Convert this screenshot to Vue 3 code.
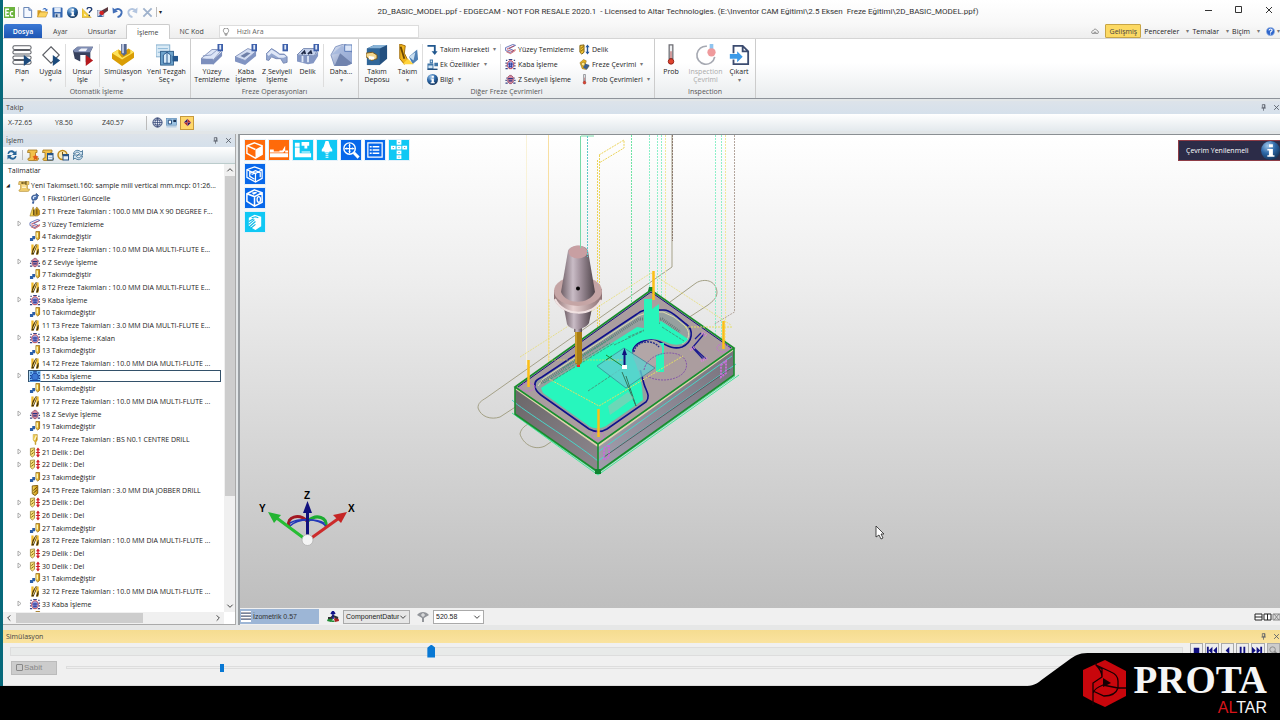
<script setup>
import { ref } from 'vue'

const quick = ['ec', '|', 'new', 'open', 'save', 'info', 'measure', 'paint', 'undo', 'redo', 'cross', '|']
const tabs = ['Ayar', 'Unsurlar', 'İşleme', 'NC Kod']
const auto = [
  { icon: 'plan', a: 'Plan', drop: true },
  { icon: 'apply', a: 'Uygula', drop: true, sep: true },
  { icon: 'feature', a: 'Unsur', b: 'İşle', sep: true },
  { icon: 'simulate', a: 'Simülasyon', drop: true },
  { icon: 'machine', a: 'Yeni Tezgah', b: 'Seç', inline: true },
]
const mill = [
  { icon: 'face', a: 'Yüzey', b: 'Temizleme' },
  { icon: 'rough', a: 'Kaba', b: 'İşleme' },
  { icon: 'profile', a: 'Z Seviyeli', b: 'İşleme' },
  { icon: 'hole', a: 'Delik', sep: true },
  { icon: 'more', a: 'Daha...', drop: true },
]
const tools = [
  { icon: 'store', a: 'Takım', b: 'Deposu' },
  { icon: 'tool', a: 'Takım', drop: true, sep: true },
]
const cycles = [
  [
    { icon: 'move', t: 'Takım Hareketi', drop: true },
    { icon: 'extra', t: 'Ek Özellikler', drop: true },
    { icon: 'info', t: 'Bilgi', drop: true },
  ],
  [
    { icon: 't-face', t: 'Yüzey Temizleme' },
    { icon: 't-rough', t: 'Kaba İşleme' },
    { icon: 't-zlevel', t: 'Z Seviyeli İşleme' },
  ],
  [
    { icon: 't-holeblue', t: 'Delik' },
    { icon: 'millcycle', t: 'Freze Çevrimi', drop: true },
    { icon: 'probe', t: 'Prob Çevrimleri', drop: true },
  ],
]
const inspect = [
  { icon: 'probe', a: 'Prob' },
  { icon: 'inspection', a: 'Inspection', b: 'Çevrimi', off: true },
  { icon: 'export', a: 'Çıkart', drop: true },
]

const change = 'Takımdeğiştir'
const t2 = 'T2 Freze Takımları : 10.0 MM DIA MULTI-FLUTE '
const steps = [
  ['t-fix', 'Fikstürleri Güncelle'],
  ['t-twin', 'T1 Freze Takımları : 100.0 MM DIA X 90 DEGREE F...'],
  ['t-face', 'Yüzey Temizleme', 1],
  ['t-change', change],
  ['t-mill', t2 + 'E...'],
  ['t-zlevel', 'Z Seviye İşleme', 1],
  ['t-change', change],
  ['t-mill', t2 + 'E...'],
  ['t-rough', 'Kaba İşleme', 1],
  ['t-change', change],
  ['t-mill', 'T3 Freze Takımları : 3.0 MM DIA MULTI-FLUTE E...'],
  ['t-rough', 'Kaba İşleme : Kalan', 1],
  ['t-change', change],
  ['t-mill', t2 + '...'],
  ['t-roughsel', 'Kaba İşleme', 1],
  ['t-change', change],
  ['t-mill', t2 + '...'],
  ['t-zlevel', 'Z Seviye İşleme', 1],
  ['t-change', change],
  ['t-centre', 'T4 Freze Takımları : BS N0.1 CENTRE DRILL'],
  ['t-hole', 'Delik : Del', 1],
  ['t-hole', 'Delik : Del', 1],
  ['t-change', change],
  ['t-drill', 'T5 Freze Takımları : 3.0 MM DIA JOBBER DRILL'],
  ['t-hole', 'Delik : Del', 1],
  ['t-hole', 'Delik : Del', 1],
  ['t-change', change],
  ['t-mill', t2 + '...'],
  ['t-hole', 'Delik : Del', 1],
  ['t-hole', 'Delik : Del', 1],
  ['t-change', change],
  ['t-mill', t2 + '...'],
  ['t-rough', 'Kaba İşleme', 1],
  ['t-change', change],
]
const selected = ref(15)
const progress = ref(358)
const speed = ref(138)
const viewTop = [
  ['v-cube', 'orange'], ['v-fixture', 'orange'], ['v-machine', 'cyan'], ['v-holder', 'cyan'],
  ['v-zoom', 'blue'], ['v-list', 'blue'], ['v-unfold', 'cyan'],
]
const viewSide = [['v-stock', 'blue'], ['v-part', 'blue'], ['v-section', 'cyan']]
const transport = ['p-stop', 'p-first', 'p-back', 'p-pause', 'p-last']
</script>

<template>
  <div class="screen">
    <svg class="defs" aria-hidden="true">
      <defs>
        <linearGradient id="steel" x1="0" y1="0" x2="1" y2="1"><stop offset="0" stop-color="#dfe8f8" /><stop offset="1" stop-color="#7587b5" /></linearGradient>
        <linearGradient id="gold" x1="0" y1="0" x2="1" y2="0"><stop offset="0" stop-color="#fbe36a" /><stop offset="1" stop-color="#c78a06" /></linearGradient>
        <radialGradient id="ball" cx=".35" cy=".25" r=".8"><stop offset="0" stop-color="#9cc4e8" /><stop offset=".5" stop-color="#2d68a8" /><stop offset="1" stop-color="#123258" /></radialGradient>
        <linearGradient id="cone" x1="0" y1="0" x2="1" y2="0"><stop offset="0" stop-color="#6f5f66" /><stop offset=".35" stop-color="#c9bcc6" /><stop offset=".55" stop-color="#a595a0" /><stop offset="1" stop-color="#4e4349" /></linearGradient>
        <linearGradient id="flange" x1="0" y1="0" x2="1" y2="0"><stop offset="0" stop-color="#8c7072" /><stop offset=".4" stop-color="#e8d2d2" /><stop offset="1" stop-color="#8c7072" /></linearGradient>
        <linearGradient id="faceL" x1="0" y1="0" x2="1" y2="1"><stop offset="0" stop-color="#6a6668" /><stop offset="1" stop-color="#8d878e" /></linearGradient>
        <linearGradient id="faceR" x1="0" y1="1" x2="1" y2="0"><stop offset="0" stop-color="#a29ead" /><stop offset="1" stop-color="#77727c" /></linearGradient>
      </defs>

      <symbol id="ec" viewBox="0 0 24 24"><rect width="24" height="24" fill="#6cb33e" /><path d="M11 5H4v14h7M4 12h6M20 10h-4l-2 2v5l2 2h4" fill="none" stroke="#fff" stroke-width="3" /></symbol>
      <symbol id="new" viewBox="0 0 24 24"><path d="M4 1h11l6 6v16H4z" fill="#f4f8ff" stroke="#5777ad" stroke-width="2" /><path d="M15 1v6h6" fill="#b9cbea" stroke="#5777ad" stroke-width="2" /></symbol>
      <symbol id="open" viewBox="0 0 24 24"><path d="M1 22V7h7l2 3h9v12z" fill="#d69a1b" /><path d="M1 22l5-11h18l-5 11z" fill="#fbd35e" stroke="#b57a10" /><path d="M12 6c2-5 7-5 9-1l2-1-1 6-5-3 2-1c-2-2-5-1-7 0z" fill="#3b6fc0" /></symbol>
      <symbol id="save" viewBox="0 0 24 24"><rect x="1" y="1" width="22" height="22" rx="2" fill="#3567b1" /><rect x="5" y="1" width="14" height="10" fill="#dfe9f7" /><rect x="6" y="14" width="12" height="9" fill="#cfd9e8" /><rect x="8" y="16" width="4" height="6" fill="#24466f" /></symbol>
      <symbol id="info" viewBox="0 0 24 24"><circle cx="12" cy="12" r="12" fill="url(#ball)" /><path d="M10 4h5v4h-5zM8 10h7v8h2v2H8v-2h2v-6H8z" fill="#fff" /></symbol>
      <symbol id="measure" viewBox="0 0 24 24"><path d="M0 3l20 20H0z" fill="#f5cf3b" stroke="#b8890c" /><path d="M5 14l5 5H5z" fill="#fff" /><path d="M11 5c1-6 12-5 10 1-1 3-5 3-5 7M16 17v3" fill="none" stroke="#223f74" stroke-width="3" /></symbol>
      <symbol id="paint" viewBox="0 0 24 24"><rect x="1" y="8" width="14" height="13" fill="#cdd6e6" stroke="#5f6f91" /><path d="M24 0L11 7l2 9 11-8z" fill="#5d3a40" /><circle cx="10" cy="13" r="5" fill="#d42020" /><path d="M1 22l7-6 5 6z" fill="#3d61a0" /></symbol>
      <symbol id="undo" viewBox="0 0 24 24"><path d="M4 9c6-8 18-5 17 4-1 5-4 8-9 9" fill="none" stroke="#426fb8" stroke-width="4" /><path d="M1 1l1 13 11-4z" fill="#426fb8" /></symbol>
      <symbol id="redo" viewBox="0 0 24 24"><path d="M20 9C14 1 2 4 3 13c1 5 4 8 9 9" fill="none" stroke="#b3c5df" stroke-width="4" /><path d="M23 1l-1 13-11-4z" fill="#b3c5df" /></symbol>
      <symbol id="cross" viewBox="0 0 24 24"><path d="M3 3l18 18M21 3L3 21" stroke="#9fb2cc" stroke-width="4" /></symbol>

      <symbol id="plan" viewBox="0 0 24 24"><g fill="#fff" stroke="#5b5e64" stroke-width="1.1"><rect x="2" y="2" width="20" height="4" rx="2" /><rect x="2" y="7" width="20" height="4" rx="2" /><rect x="2" y="13" width="20" height="4" rx="2" /><rect x="2" y="18" width="20" height="4" rx="2" /></g><path d="M14 12l8 6-8 6z" fill="#1b4a7c" /></symbol>
      <symbol id="apply" viewBox="0 0 24 24"><path d="M12 3l9 9-9 9-9-9z" fill="#fff" stroke="#5b5e64" stroke-width="1.2" /><path d="M14 12l8 6-8 6z" fill="#1b4a7c" /></symbol>
      <symbol id="feature" viewBox="0 0 24 24"><path d="M1 7l5-4h17l-3 6v8l-5 3V12H9v7l-6-3z" fill="#37415e" /><path d="M1 7l5-4h17l-3 6H3z" fill="#7f8db3" /><path d="M7 7l3-2h7l-2 3H8z" fill="#f1f4fb" /><path d="M15 12l8 6-8 6z" fill="#b5191d" /></symbol>
      <symbol id="simulate" viewBox="0 0 24 24"><path d="M0 10l7-4 5 3 6-4 6 4v6L11 24 0 16z" fill="#d99d05" /><path d="M0 10l7-4v4l4 5 9-5v-4l4 3-13 8z" fill="#ffe359" /><path d="M10 0h6v10l-3 3-3-3z" fill="#55678f" /><path d="M11 0h2v10h-2z" fill="#c0cbe4" /></symbol>
      <symbol id="machine" viewBox="0 0 24 24"><rect x="0" y="1" width="15" height="13" fill="#d9eaf6" stroke="#7eaacb" /><path d="M2 5h11M2 9h11" stroke="#85b2d4" /><rect x="5" y="8" width="14" height="15" fill="#6fa4cc" stroke="#2c5b88" /><path d="M8 21V12l4-3 4 3v9zM12 9v12" fill="#d7ebf9" stroke="#225288" /><path d="M18 13h6v6h-6z" fill="#25578d" /></symbol>
      <symbol id="face" viewBox="0 0 24 24"><path d="M0 16L12 6h11L13 18z" fill="#dce5f7" stroke="#8292ba" /><path d="M0 16h13v6H0zM13 18L23 8v5L13 23z" fill="#7c8fbd" /><path d="M2 13l9-1 7-6" fill="none" stroke="#8798c2" /><path d="M18 0h6v8h-6z" fill="#3d5faa" /><path d="M20 1h2v5h-2z" fill="#dfe9f8" /></symbol>
      <symbol id="rough" viewBox="0 0 24 24"><path d="M0 14l14-9 9 3-12 10z" fill="#d3ddf2" stroke="#8292ba" /><path d="M0 14l11 4v5L0 19zM11 18L23 8v5L11 23z" fill="#8194c2" /><path d="M6 13l7-4 4 1-7 5z" fill="#6e7fa8" /><path d="M18 0h6v8h-6z" fill="#3d5faa" /><path d="M20 1h2v5h-2z" fill="#dfe9f8" /></symbol>
      <symbol id="profile" viewBox="0 0 24 24"><path d="M0 11l6-6 5 3 4 3h5l3 3v6l-4 1-3-5h-5l-5-2-3 4-3-1z" fill="#93a6cf" stroke="#7587b2" /><path d="M1 11l5-5 5 3 4 3h5l2 2-3 1h-5L6 10l-3 3z" fill="#dfe7f7" /><path d="M18 0h6v8h-6z" fill="#3d5faa" /><path d="M20 1h2v5h-2z" fill="#dfe9f8" /></symbol>
      <symbol id="hole" viewBox="0 0 24 24"><path d="M0 12l7-7h16l-4 8z" fill="#c5d2ec" stroke="#7183ad" /><path d="M0 12l19 1 4-5v5l-5 8-6 1-12-3z" fill="#8497c4" /><path d="M5 11l3-3 1 3M12 11l3-3 1 3" stroke="#202b49" stroke-width="2" fill="none" /><path d="M6 13v7M12 13v7" stroke="#dde6f6" stroke-width="2" /><path d="M18 0h6v8h-6z" fill="#3d5faa" /><path d="M20 1h2v5h-2z" fill="#dfe9f8" /></symbol>
      <symbol id="more" viewBox="0 0 24 24"><path d="M1 12L6 3l9-3 9 4v17l-7 3H5z" fill="url(#steel)" stroke="#8094c0" /><path d="M1 12l10-2L24 21V10L13 2z" fill="#9fb3dc" opacity=".7" /><path d="M5 24h12l7-3-13-11z" fill="#7083ae" /><path d="M16 1h8v7h-8z" fill="#dbe5f7" stroke="#5576b5" /></symbol>
      <symbol id="store" viewBox="0 0 24 24"><path d="M1 5l8-4h14v15l-8 7H1z" fill="#24507f" /><path d="M1 5l8-4h14l-8 4z" fill="#88b3d7" /><path d="M1 5h14v18H1z" fill="#2f6699" /><path d="M0 10l7-1 5 3v4l-6 2-6-4z" fill="#f4d88e" stroke="#7b5716" /><path d="M3 13l6 1v3H3z" fill="#fff" /></symbol>
      <symbol id="tool" viewBox="0 0 24 24"><path d="M3 0l6 2-1 8 4 8-4 4-5-6z" fill="#f0b41b" stroke="#9d6807" /><path d="M4 3l4 13" stroke="#6b4806" stroke-width="2" /><path d="M13 14l9-8 1 11-6 5z" fill="#4f80b5" /><path d="M13 14l7-5-2 9z" fill="#c9def0" /><path d="M6 22l6-6 6 6z" fill="#ffd43e" /></symbol>
      <symbol id="move" viewBox="0 0 24 24"><path d="M1 4h16v14" fill="none" stroke="#21578e" stroke-width="4" /><path d="M10 16h13l-6 8z" fill="#21578e" /></symbol>
      <symbol id="extra" viewBox="0 0 24 24"><path d="M1 10h13v13H1zM6 1h7v8H6zM16 8h8v8h-8z" fill="#3f75a7" /><path d="M3 14h9v6H3zM8 3h3v4H8z" fill="#d3e6f5" /><path d="M1 21h22v3H1z" fill="#234f7c" /></symbol>
      <symbol id="millcycle" viewBox="0 0 24 24"><path d="M2 8l8-7 6 3-2 7 8 5-6 7-9-2z" fill="#e8b321" stroke="#7e5a06" /><path d="M12 10l11 3-6 10-8-4z" fill="#3b5f92" /><circle cx="9" cy="11" r="4" fill="#fbe78b" stroke="#7e5a06" /></symbol>
      <symbol id="probe" viewBox="0 0 24 24"><path d="M10 1h4v15h-4z" fill="#eef0f2" stroke="#6e6e74" stroke-width="1.4" /><path d="M12 8v10" stroke="#b55" stroke-width="1.2" /><circle cx="12" cy="19" r="3" fill="#e0442f" stroke="#8d1b12" /></symbol>
      <symbol id="inspection" viewBox="0 0 24 24"><path d="M13 2.500A9.800 9.800 0 1 0 21.500 14" fill="none" stroke="#a6a9b2" stroke-width="1.800" /><path d="M16 0h4v6h-4z" fill="#8fc4ef" /><circle cx="18" cy="9" r="4.500" fill="#ef9a9c" /></symbol>
      <symbol id="export" viewBox="0 0 24 24"><path d="M6 10V2h10l6 6v14H6v-5M16 2v6h6" fill="none" stroke="#3c4c70" stroke-width="2" /><path d="M2 11h8V8l6 6-6 6v-4H2z" fill="#3b9ae8" /></symbol>

      <symbol id="t-set" viewBox="0 0 24 24"><path d="M2 3h20v6h-3v9h4c0 4-2 5-4 5H4c-3 0-3-4 0-4h1V9H1z" fill="#edca6c" stroke="#a98329" /><path d="M7 4l4 4M11 4L7 8M18 4h-4v4h4" fill="none" stroke="#5b4612" stroke-width="2" /><path d="M8 12h8M8 15h8" stroke="#fff4cd" stroke-width="2" /></symbol>
      <symbol id="t-fix" viewBox="0 0 24 24"><path d="M8 17C1 12 6 2 13 5l2-4 5 5-3 2c2 4-3 9-8 7z" fill="#486fae" stroke="#1d3d72" stroke-width="1.500" /><path d="M9 13c-2-4 2-7 5-5" stroke="#d6e5fa" stroke-width="3" fill="none" /><path d="M9 18l-2 5" stroke="#3a5d9c" stroke-width="4" /></symbol>
      <symbol id="t-twin" viewBox="0 0 24 24"><path d="M1 22l3-10 4-10 3 8v12zM12 22V8l4-6 6 8v9l-5 3z" fill="url(#gold)" stroke="#7a5608" /><path d="M9 8v12M16 7v12" stroke="#4c3603" stroke-width="2" /></symbol>
      <symbol id="t-face" viewBox="0 0 24 24"><path d="M1 8L17 1l6 2L9 10l10 4-7 5-11-5z" fill="#eef1ff" stroke="#3348a0" stroke-width="1.500" /><path d="M4 11L20 4M3 17l9 4 11-7M5 13l10 3 8-4" fill="none" stroke="#c02d35" stroke-width="1.500" /></symbol>
      <symbol id="t-rough" viewBox="0 0 24 24"><path d="M2 3h3M8 1h8M19 3h3M1 9h3M20 9h3M1 15h3M20 15h3M1 21h5M18 21h5" stroke="#394484" stroke-width="2.500" /><path d="M5 9l4-5h6l4 5v7l-4 5H9l-4-5z" fill="#a9b4ea" stroke="#c4404a" stroke-width="2" /><path d="M6 11h12M8 16h8M10 8v11M14 8v11" stroke="#2e3c9c" stroke-width="2" /></symbol>
      <symbol id="t-roughsel" viewBox="0 0 24 24"><rect width="24" height="24" fill="#6fb8f4" /><path d="M2 4h3M8 2h8M19 4h3M1 10h3M20 10h3M1 16h3M20 16h3M1 21h22" stroke="#123b94" stroke-width="2.500" /><path d="M5 9l4-4h6l4 4v7l-4 4H9l-4-4z" fill="#3a79d4" stroke="#173d9a" stroke-width="2" /></symbol>
      <symbol id="t-zlevel" viewBox="0 0 24 24"><path d="M1 14h3M1 20h5M20 14h3M18 20h5M3 9h2M19 9h2" stroke="#394484" stroke-width="2.500" /><path d="M6 7l4-4h4l4 4v10l-4 4h-4l-4-4z" fill="#d58ba0" stroke="#8a3350" stroke-width="1.500" /><path d="M7 10h10M8 15h8" stroke="#273385" stroke-width="3" /></symbol>
      <symbol id="t-change" viewBox="0 0 24 24"><path d="M1 15h5v-4h6v7H8v4H1z" fill="#2b5fa9" /><path d="M14 1h8v15l-4 4-4-4z" fill="url(#gold)" stroke="#8a5b06" stroke-width="1.500" /><path d="M17 4v10" stroke="#fff4b0" stroke-width="3" /></symbol>
      <symbol id="t-mill" viewBox="0 0 24 24"><path d="M4 1h5v22H4zM15 1h5v22h-5z" fill="#f1b929" /><path d="M4 23l3-12 6-10h4l-3 10-5 12zM14 23l4-11 2-2v8l-2 5z" fill="#493408" /><path d="M8 19l7-17" stroke="#fbe48c" stroke-width="2" /></symbol>
      <symbol id="t-centre" viewBox="0 0 24 24"><path d="M8 1h9v12l-3 5v5h-2v-5l-4-5z" fill="url(#gold)" stroke="#b58d22" /><path d="M11 13l4-10" stroke="#fff6c6" stroke-width="3" /></symbol>
      <symbol id="t-drill" viewBox="0 0 24 24"><path d="M6 2l12-1v17l-6 5-6-4z" fill="url(#gold)" stroke="#7b5405" stroke-width="2" /><path d="M8 12l8-7M8 18l8-7" stroke="#5f4103" stroke-width="2" /></symbol>
      <symbol id="t-hole" viewBox="0 0 24 24"><path d="M2 3l9-1v16l-5 4-4-4z" fill="#f8e178" stroke="#8b6e18" stroke-width="1.500" /><path d="M4 10l5-4M4 16l5-4" stroke="#75590a" stroke-width="2" /><path d="M18.500 4v16" stroke="#d21f2c" stroke-width="3" /><path d="M14 7l4.500-6L23 7zM14 17l4.500 6 4.500-6zM14 11h9v2h-9z" fill="#d21f2c" /></symbol>
      <symbol id="t-holeblue" viewBox="0 0 24 24"><path d="M2 3l9-1v16l-5 4-4-4z" fill="#f4c63a" stroke="#75590a" stroke-width="2" /><path d="M4 10l6-5M4 16l6-5" stroke="#75590a" stroke-width="2" /><path d="M18.500 4v16" stroke="#24569c" stroke-width="3" /><path d="M14 7l4.500-6L23 7zM14 17l4.500 6 4.500-6z" fill="#24569c" /></symbol>

      <symbol id="refresh" viewBox="0 0 24 24"><path d="M3 10C4 1 14 1 18 6l3-3v9h-9l3-3C12 5 7 6 6 10zM21 14c-1 9-11 9-15 4l-3 3v-9h9l-3 3c3 4 8 3 9-1z" fill="#28669a" /></symbol>
      <symbol id="refresh2" viewBox="0 0 24 24"><path d="M3 10C4 1 14 1 18 6l3-3v9h-9l3-3C12 5 7 6 6 10zM21 14c-1 9-11 9-15 4l-3 3v-9h9l-3 3c3 4 8 3 9-1z" fill="#cfe2ef" stroke="#2d628a" stroke-width="1.500" /></symbol>
      <symbol id="scroll" viewBox="0 0 24 24"><path d="M2 2h18v5h-3v11h6c0 4-2 5-4 5H4c-3 0-3-5 0-5h2V7H1z" fill="#f2c04a" stroke="#9c701a" stroke-width="1.500" /><path d="M17 10l2 4 4 1-3 3 1 5-4-3-4 3 1-5-3-3 4-1z" fill="#df5b1b" /></symbol>
      <symbol id="scroll2" viewBox="0 0 24 24"><path d="M2 2h18v5h-3v11h6c0 4-2 5-4 5H4c-3 0-3-5 0-5h2V7H1z" fill="#f2c04a" stroke="#9c701a" stroke-width="1.500" /><rect x="11" y="9" width="11" height="13" fill="#e8f1fb" stroke="#285486" stroke-width="2" /><path d="M11 11h11" stroke="#285486" stroke-width="3" /><path d="M13 17h7" stroke="#9db8d8" stroke-width="2" /></symbol>
      <symbol id="clock" viewBox="0 0 24 24"><circle cx="11" cy="12" r="9" fill="#fbe9b2" stroke="#c08a1d" stroke-width="3" /><path d="M11 6v7" stroke="#7a5713" stroke-width="2" /><rect x="12" y="11" width="11" height="11" fill="#e8f1fb" stroke="#285486" stroke-width="2" /><path d="M12 13h11" stroke="#285486" stroke-width="3" /></symbol>
      <symbol id="globe" viewBox="0 0 24 24"><circle cx="12" cy="12" r="10" fill="#e5ebf6" stroke="#2b3d6f" stroke-width="2" /><path d="M12 2v20M2 12h20M4 7h16M4 17h16M12 2C5 8 5 16 12 22M12 2c7 6 7 14 0 20" fill="none" stroke="#2b3d6f" stroke-width="1.500" /></symbol>
      <symbol id="camera" viewBox="0 0 24 24"><rect x="1" y="3" width="22" height="15" fill="#9cc2e2" stroke="#5f8db8" stroke-width="1.500" /><path d="M5 7h7v8H5z" fill="#fff" stroke="#1c4778" stroke-width="2" /><path d="M16 6h6v5h-6z" fill="#1c3458" /><path d="M1 19h22v4H1z" fill="#bcd0e2" /></symbol>
      <symbol id="datum" viewBox="0 0 24 24"><path d="M12 2l10 10-10 10L2 12z" fill="#fff" /><path d="M12 2v10H2zM22 12H12v10z" fill="#2b1b6e" /><path d="M12 2v10h10zM2 12h10v10z" fill="#b93024" /></symbol>
      <symbol id="pin" viewBox="0 0 24 24"><path d="M8 2h9v11H8zM5 14h15M12 14v9M15 3v10" fill="none" stroke="#555b66" stroke-width="2.500" /></symbol>
      <symbol id="x" viewBox="0 0 24 24"><path d="M4 4l16 16M20 4L4 20" stroke="#555b66" stroke-width="3" /></symbol>
      <symbol id="chev" viewBox="0 0 24 24"><path d="M4 8l8 8 8-8" fill="none" stroke="#444" stroke-width="3" /></symbol>
      <symbol id="bulb" viewBox="0 0 24 24"><path d="M8 17c0-4-4-4-4-9a8 8 0 0 1 16 0c0 5-4 5-4 9zM8 20h8M10 23h4" fill="none" stroke="#666" stroke-width="2" /></symbol>
      <symbol id="cloud" viewBox="0 0 24 24"><path d="M3 19c-3-4 0-8 4-8 1-6 10-6 11 0 4 0 6 5 3 8zM8 19l4-5 4 5" fill="none" stroke="#666" stroke-width="2" /></symbol>
      <symbol id="help" viewBox="0 0 24 24"><circle cx="12" cy="12" r="11" fill="#2f66cc" stroke="#9db9e6" stroke-width="2" /><path d="M8 9c0-5 9-5 8 0 0 3-4 2-4 6M12 17v3" fill="none" stroke="#fff" stroke-width="3" /></symbol>

      <symbol id="v-cube" viewBox="0 0 21 21"><path d="M10 3l8 3v9l-7 4-9-5V6z" fill="none" stroke="#fff" stroke-width="1.500" /><path d="M11 10l7-4v9l-7 4z" fill="#fff" /><path d="M2 6l9 4" stroke="#fff" stroke-width="1.500" /></symbol>
      <symbol id="v-fixture" viewBox="0 0 21 21"><path d="M1 14h19v4H1zM1 13v-3h4v2h6v-1h3l3-5v5l-2 2zM17 11h3v2h-3z" fill="#fff" /></symbol>
      <symbol id="v-machine" viewBox="0 0 21 21"><path d="M2 3h5v4H2zM2 8h5v6h12v4H2zM9 2h8v4h-2v3h-3V6H9zM9 12h9v1H9z" fill="#fff" /></symbol>
      <symbol id="v-holder" viewBox="0 0 21 21"><path d="M9 1h3l2 6 2 3v2h-3v1H8v-1H5v-2l2-3zM9 14h3v1H9zM9 16h3v1H9zM9 18h3v1H9z" fill="#fff" /></symbol>
      <symbol id="v-zoom" viewBox="0 0 21 21"><circle cx="9" cy="9" r="6" fill="none" stroke="#fff" stroke-width="1.500" /><path d="M13.500 13.500l5 5" stroke="#fff" stroke-width="3" /><path d="M9 4v10M4 9h10M8 6h2M8 12h2M6 8v2M12 8v2" stroke="#fff" stroke-width="1.200" /></symbol>
      <symbol id="v-list" viewBox="0 0 21 21"><path d="M3 3h15v15H3z" fill="none" stroke="#fff" stroke-width="1.300" /><path d="M5 7h2M5 10.500h2M5 14h2M8 7h7M8 10.500h7M8 14h7" stroke="#fff" stroke-width="1.500" /></symbol>
      <symbol id="v-unfold" viewBox="0 0 21 21"><path d="M8 0h5v5H8zM8 6h5v4H8zM8 11h5v4H8zM2 6h5v4H2zM14 6h5v4h-5zM8 16h5v4H8z" fill="#fff" /><path d="M10 2h1v1h-1zM10 7.500h1v1h-1zM4 7.500h1v1H4zM16 7.500h1v1h-1zM10 12.500h1v1h-1zM10 17.500h1v1h-1z" fill="#0b5f86" /></symbol>
      <symbol id="v-stock" viewBox="0 0 21 21"><path d="M10 3l8 3v9l-7 4-9-5V6zM2 6l9 4 7-4M11 10v9M5 8v5l5 3M5 10l6-3 5 2v5M7 11l4-2" fill="none" stroke="#fff" stroke-width="1.300" /></symbol>
      <symbol id="v-part" viewBox="0 0 21 21"><path d="M10 2l8 3v10l-8 4-8-5V6zM2 6l8 3 8-4M10 9v10" fill="none" stroke="#fff" stroke-width="1.600" /><path d="M7 5l4-1 2 1-4 2z" fill="#fff" /><ellipse cx="14.500" cy="12" rx="1.800" ry="3" fill="none" stroke="#fff" stroke-width="1.400" /></symbol>
      <symbol id="v-section" viewBox="0 0 21 21"><path d="M10 3l7 2v10l-6 4-7-4V6z" fill="#fff" /><path d="M4 10l5-3M4 13l6-5M4 16l7-6M6 17l5-4M7 6l4-1 3 1" stroke="#0bb9e6" stroke-width="1.200" fill="none" /></symbol>

      <symbol id="p-stop" viewBox="0 0 12 12"><path d="M3 3h6v6H3z" fill="#101080" /></symbol>
      <symbol id="p-first" viewBox="0 0 12 12"><path d="M1 2h2v8H1zM7 2v8L3 6zM12 2v8L8 6z" fill="#101080" /></symbol>
      <symbol id="p-back" viewBox="0 0 12 12"><path d="M8 2v8L4 6z" fill="#101080" /></symbol>
      <symbol id="p-pause" viewBox="0 0 12 12"><path d="M3 2h2v8H3zM7 2h2v8H7z" fill="#101080" /></symbol>
      <symbol id="p-last" viewBox="0 0 12 12"><path d="M9 2h2v8H9zM5 2v8l4-4zM0 2v8l4-4z" fill="#101080" /></symbol>
      <symbol id="lens" viewBox="0 0 12 12"><circle cx="5" cy="5" r="3" fill="none" stroke="#888" /><path d="M7 7l4 4" stroke="#888" stroke-width="2" /></symbol>
    </svg>

    <div class="window">
      <header class="titlebar">
        <div class="quick">
          <template v-for="(q, i) in quick" :key="i">
            <span v-if="q === '|'" class="bar"></span>
            <button v-else class="bare" :aria-label="q"><svg class="i11"><use :href="'#' + q" /></svg></button>
          </template>
          <span class="more">▾</span>
        </div>
        <h1>2D_BASIC_MODEL.ppf - EDGECAM - NOT FOR RESALE 2020.1&nbsp; - Licensed to Altar Technologies. (E:\Inventor CAM Eğitimi\2.5 Eksen&nbsp; Freze Eğitimi\2D_BASIC_MODEL.ppf)</h1>
        <div class="winbtns">
          <button class="bare" aria-label="Minimize"><svg viewBox="0 0 8 8"><path d="M0 4.500h7" stroke="#333" /></svg></button>
          <button class="bare" aria-label="Maximize"><svg viewBox="0 0 8 8"><path d="M.5.5h6v6h-6z" fill="none" stroke="#333" /></svg></button>
          <button class="bare" aria-label="Close"><svg viewBox="0 0 8 8"><path d="M1 1l6 6M7 1L1 7" stroke="#333" /></svg></button>
        </div>
      </header>

      <nav class="tabs">
        <button class="file">Dosya</button>
        <button v-for="t in tabs" :key="t" class="tab" :class="{ on: t === 'İşleme' }">{{ t }}</button>
        <label class="search"><svg class="i8"><use href="#bulb" /></svg><input type="text" placeholder="Hızlı Ara" aria-label="Hızlı Ara" /></label>
        <div class="right">
          <svg class="i8"><use href="#cloud" /></svg>
          <button class="adv">Gelişmiş</button>
          <button class="menu">Pencereler<i>▾</i></button>
          <button class="menu">Temalar<i>▾</i></button>
          <button class="menu">Biçim<i>▾</i></button>
          <button class="menu helpb" aria-label="Yardım"><svg class="i9"><use href="#help" /></svg><i>▾</i></button>
        </div>
      </nav>

      <section class="ribbon">
        <div class="group">
          <div class="btns g-auto">
            <button v-for="b in auto" :key="b.icon" class="big" :class="{ sep: b.sep }">
              <svg class="i22"><use :href="'#' + b.icon" /></svg><span>{{ b.a }}</span><span v-if="b.b">{{ b.b }}<i v-if="b.inline"> ▾</i></span><i v-if="b.drop">▾</i>
            </button>
          </div>
          <p>Otomatik İşleme</p>
        </div>
        <div class="group">
          <div class="btns g-mill">
            <button v-for="b in mill" :key="b.icon" class="big" :class="{ sep: b.sep }">
              <svg class="i22"><use :href="'#' + b.icon" /></svg><span>{{ b.a }}</span><span v-if="b.b">{{ b.b }}</span><i v-if="b.drop">▾</i>
            </button>
          </div>
          <p>Freze Operasyonları</p>
        </div>
        <div class="group">
          <div class="btns g-cycle">
            <button v-for="b in tools" :key="b.icon" class="big" :class="{ sep: b.sep }">
              <svg class="i22"><use :href="'#' + b.icon" /></svg><span>{{ b.a }}</span><span v-if="b.b">{{ b.b }}</span><i v-if="b.drop">▾</i>
            </button>
            <div v-for="(col, c) in cycles" :key="c" class="col" :class="{ sep: c === 0 }">
              <button v-for="b in col" :key="b.t" class="small"><svg class="i11"><use :href="'#' + b.icon" /></svg>{{ b.t }}<i v-if="b.drop">▾</i></button>
            </div>
          </div>
          <p>Diğer Freze Çevrimleri</p>
        </div>
        <div class="group">
          <div class="btns g-insp">
            <button v-for="b in inspect" :key="b.icon" class="big" :class="{ off: b.off }">
              <svg class="i22"><use :href="'#' + b.icon" /></svg><span>{{ b.a }}</span><span v-if="b.b">{{ b.b }}</span><i v-if="b.drop">▾</i>
            </button>
          </div>
          <p>Inspection</p>
        </div>
      </section>

      <div class="panelhead follow"><h2>Takip</h2><svg class="i7"><use href="#pin" /></svg><svg class="i7"><use href="#x" /></svg></div>
      <div class="coords">
        <span>X-72.65</span><span>Y8.50</span><span>Z40.57</span>
        <div class="cicons">
          <button class="bare" aria-label="Dünya"><svg class="i11"><use href="#globe" /></svg></button>
          <button class="bare" aria-label="Kamera"><svg class="i11"><use href="#camera" /></svg></button>
          <button class="bare act" aria-label="Datum"><svg class="i9"><use href="#datum" /></svg></button>
        </div>
      </div>

      <main class="work">
        <aside class="side">
          <div class="panelhead"><h2>İşlem</h2><svg class="i7"><use href="#pin" /></svg><svg class="i7"><use href="#x" /></svg></div>
          <div class="sidebar-tools">
            <button class="bare" aria-label="Yenile"><svg class="i12"><use href="#refresh" /></svg></button>
            <span class="bar"></span>
            <button class="bare" aria-label="Yeni"><svg class="i12"><use href="#scroll" /></svg></button>
            <button class="bare" aria-label="Liste"><svg class="i12"><use href="#scroll2" /></svg></button>
            <button class="bare" aria-label="Süre"><svg class="i12"><use href="#clock" /></svg></button>
            <button class="bare" aria-label="Güncelle"><svg class="i12"><use href="#refresh2" /></svg></button>
          </div>
          <div class="treebox">
            <div class="tree">
              <h3>Talimatlar</h3>
              <div class="root"><i>◢</i><svg class="i12"><use href="#t-set" /></svg><span>Yeni Takımseti.160: sample mill vertical mm.mcp: 01:26...</span></div>
              <ul>
                <li v-for="(s, n) in steps" :key="n" @click="selected = n + 1">
                  <svg class="twist" viewBox="0 0 6 8"><path v-if="s[2]" d="M1 1l3 2.500-3 2.500z" fill="#fff" stroke="#999" stroke-width=".8" /></svg>
                  <div class="item" :class="{ sel: selected === n + 1 }"><svg class="i12"><use :href="'#' + s[0]" /></svg><span>{{ n + 1 }} {{ s[1] }}</span></div>
                </li>
              </ul>
            </div>
            <div class="vscroll"><svg class="i8 up"><use href="#chev" /></svg><div class="vthumb"></div><svg class="i8"><use href="#chev" /></svg></div>
            <div class="hscroll"><svg class="i8 left"><use href="#chev" /></svg><div class="htrack"><div class="hthumb"></div></div><svg class="i8 rgt"><use href="#chev" /></svg></div>
          </div>
        </aside>

        <section class="view">
          <div class="canvas">
            <svg class="scene" viewBox="240 136 1040 473" preserveAspectRatio="xMinYMin slice">
              <g fill="none" stroke-width="1">
                <path d="M478 409c0-5 3-7 8-10L672 268V136" stroke="#a5a188" />
                <path d="M672.500 136v106" stroke="#8d7a70" stroke-dasharray="2 1" />
                <path d="M478 409c3 9 13 12 22 9l20-13M520 435c1-6 6-9 10-11l30-20M520 435c3 10 14 17 25 12l16-11M670 303l26-19c8-5 20-3 21 9 0 6-4 9-9 13l-20 13" stroke="#a3a085" />
                <path d="M734.500 136v177l-20 12" stroke="#b3a59c" stroke-dasharray="2 1" />
                <path d="M526.500 136v230" stroke="#f9f2d8" /><path d="M548.500 136v240" stroke="#f8dfa2" />
                <path d="M649.500 136v160M657.500 136v160M661.500 136v180M715.500 136v240M721.500 136v210" stroke="#8df0c9" stroke-dasharray="2 1" />
                <path d="M665.500 136v170M725.500 136v220" stroke="#f1e79a" stroke-dasharray="2 1" />
                <path d="M631.500 136v195" stroke="#6fe3a4" stroke-dasharray="2 1" />
                <path d="M597.500 161v250M599.500 156v240M599 156l25-15v8l-25 15" stroke="#ecd45a" stroke-dasharray="2 1" />
              </g>
              <path d="M515 388L598 445V473L515 415z" fill="url(#faceL)" />
              <path d="M598 445L734 349V376L598 473z" fill="url(#faceR)" />
              <path d="M515 388L651 291 734 349 598 445z" fill="#ab9d9f" />
              <path d="M515 389L598 447 734 350" fill="none" stroke="#ded8ae" stroke-width="2" />
              <path d="M512 401c10 10 60 40 86 61l138-97M598 453l134-96" fill="none" stroke="#4ad5c9" />
              <path d="M604 458l126-88" stroke="#5e535b" />
              <path d="M515 416L598 474 735 377M512 414l86 62 141-100" fill="none" stroke="#46e59a" />
              <path d="M535 387C534 382 538 380 542 378L637 315C642 311 645 311 650 311H664C669 311 672 314 676 317L686 325C694 331 693 343 682 348 673 351 666 346 660 343 652 339 637 341 633 350 633 358 638 362 640 370L644 385C646 392 651 397 646 403L607 430C600 434 595 433 589 430L541 396C537 393 535 391 535 387Z" fill="#96a09f" stroke="#10108c" stroke-width="1.600" />
              <path d="M538 387L543 380 638 317 649 313H663L674 318 684 326C691 332 690 341 682 345" fill="none" stroke="#e0dab0" />
              <path d="M541 384L639 320H662L680 333" fill="none" stroke="#6a7d7b" stroke-dasharray="1 1" stroke-width="3" />
              <path d="M541 389L637 328 650 330 661 322 688 340C684 346 676 347 668 344 655 337 636 339 632 351 632 358 637 365 639 373L642 388 643 401 606 427C600 430 594 430 589 427L543 394Z" fill="#27f6bd" />
              <path d="M544 384l66-40M552 382l62-38M614 346l46-22M628 338l32-14M662 328l22 14M563 369l50-31M588 392l36-24" fill="none" stroke="#429d80" stroke-dasharray="3 1" />
              <path d="M644 300h8v35h-8zM645 315l14-10v27l-12 3zM656 344h8v29h-8z" fill="#28f5bb" />
              <path d="M633 354c4-13 26-19 29-5v5l-6 2v10l-18 6c-1-8-5-10-5-18z" fill="#b2a6a7" />
              <path d="M597 367l27-18 31 20-29 20z" fill="#61cfd0" opacity=".8" stroke="#3f8a9a" />
              <path d="M622 373l14 34M626 377l10 30" stroke="#34785f" /><path d="M608 407l20-14 6 6-24 17z" fill="#9ac5b2" opacity=".6" />
              <path d="M644 371c2-12 18-20 33-16 12 4 12 15 4 21-10 7-26 6-34 1" fill="none" stroke="#8559a8" stroke-dasharray="2 1" />
              <path d="M634 353c2-12 19-13 25-5" fill="none" stroke="#28308c" stroke-dasharray="2 1" stroke-width="1.500" />
              <path d="M704 335l-11 13 13 12M701 334l-6 6M692 348l11 12" stroke="#1a1a90" stroke-width="1.300" fill="none" />
              <path d="M702 334l5 3M690 351l5-3M701 362l6-3" stroke="#d583d8" stroke-width="3" stroke-dasharray="1 1" />
              <path d="M515 388L651 291 734 349 598 445zM515 388v27l83 58V445M598 473l136-97V349" fill="none" stroke="#178e2d" stroke-width="1.600" />
              <path d="M518 388L651 293 731 349" fill="none" stroke="#12127d" />
              <path d="M649 288h4l1 4h-6zM595 470h6v5h-6z" fill="#0f8531" />
              <g fill="none" stroke="#c56fd6" stroke-dasharray="2 1"><ellipse cx="528" cy="388" rx="7" ry="4" /><ellipse cx="598" cy="437" rx="6" ry="4" /><ellipse cx="723" cy="349" rx="6" ry="4" /><path d="M604 449l5-3v12l-5 3zM721 366l5-4v12l-5 4z" stroke-width="2" /></g>
              <g fill="none" stroke-dasharray="2 1"><path d="M549 300v60M548 361h77M520 358l131-84M651 274l80 52" stroke="#e6d850" opacity=".6" /><path d="M549 380l50 27 84-50M685 328h47" stroke="#e3de65" /></g>
              <path d="M528.500 361v27M653.500 272v29M723.500 322v28M598.500 410v28" stroke="#fdbf16" stroke-width="2.500" />
              <path d="M624.500 368v-14" stroke="#10107d" stroke-width="2" /><path d="M622 356l2.500-7 2.500 7z" fill="#10107d" /><path d="M624 368l-18-12M606 361l6-4" stroke="#188b2f" /><path d="M622 366h5v4h-5z" fill="#fff" />
              <path d="M575 329h7v34l-3 4-4-3z" fill="#a97d13" /><path d="M576 330v34" stroke="#e5bc45" /><path d="M574 325h8v8h-8z" fill="url(#cone)" /><path d="M577 366h3v2h-3z" fill="#f12828" />
              <path d="M564 309h28l-3 15c-5 8-19 8-22 1z" fill="url(#cone)" />
              <path d="M554 291v9c8 19 40 19 48 0v-10z" fill="url(#flange)" /><ellipse cx="578" cy="292" rx="24" ry="15" fill="#c5a5a5" /><path d="M555 300c8 18 38 18 46 1" fill="none" stroke="#f0e2e2" stroke-width="2" />
              <path d="M568 252c2-7 18-7 20 0l7 41c-6 13-29 13-34 0z" fill="url(#cone)" /><ellipse cx="578" cy="253" rx="9.500" ry="6.500" fill="#c89fa2" /><circle cx="578" cy="289.500" r="2" fill="#050505" />
              <path d="M580.500 137v112M581 137h13" stroke="#77d9a7" fill="none" /><path d="M587.500 137v121" stroke="#5cc8c8" stroke-dasharray="2 1" />
              <g stroke-linecap="round" fill="none">
                <path d="M289 527c-3-9 10-13 18-5" stroke="#a21822" stroke-width="3" /><path d="M308 522c9-8 19-3 18 5" stroke="#1cab31" stroke-width="3" /><path d="M290 527c8-8 28-8 36 0M290 524c9-5 28-4 34 0" stroke="#2438b9" stroke-width="1.500" />
                <path d="M305 540L274 517" stroke="#27bd34" stroke-width="3" /><path d="M310 540L342 517" stroke="#cc2b2b" stroke-width="3" /><path d="M307.500 538V512" stroke="#10107d" stroke-width="3" />
              </g>
              <path d="M268 513l13 3-7 8z" fill="#23b432" /><path d="M347 513l-14 3 8 8z" fill="#c52525" /><path d="M303 514l4.500-12 4.500 12z" fill="#10107d" /><circle cx="307.500" cy="541" r="5.500" fill="#f4f4f4" stroke="#aaa" stroke-width=".7" />
              <g class="axis"><text x="259" y="513">Y</text><text x="304" y="500">Z</text><text x="348" y="513">X</text></g>
              <path d="M876 527v11l3-2 2 4 2-1-2-4h3z" fill="#fff" stroke="#222" stroke-width=".8" />
            </svg>
            <div class="viewtools">
              <div class="vrow"><button v-for="v in viewTop" :key="v[0]" :class="v[1]" :aria-label="v[0]"><svg><use :href="'#' + v[0]" /></svg></button></div>
              <button v-for="v in viewSide" :key="v[0]" :class="v[1]" :aria-label="v[0]"><svg><use :href="'#' + v[0]" /></svg></button>
            </div>
            <div class="notice"><span>Çevrim Yenilenmeli</span><svg><use href="#info" /></svg></div>
          </div>
          <footer class="status">
            <button class="viewname"><svg viewBox="0 0 11 11"><path d="M0 1h10M0 4h10M0 7h10M0 10h10" stroke="#fff" stroke-width="2" /><path d="M0 2h10M0 5h10M0 8h10" stroke="#556" /></svg>İzometrik 0.57</button>
            <svg class="axes" viewBox="0 0 14 12"><path d="M1 10c1-4 4-4 6-2l-2 3zM5 11l2-2 2 2z" fill="#218b37" /><path d="M8 8c2-3 5-1 5 2l-4 1z" fill="#a82323" /><path d="M2 7h3l2-2 5 2" stroke="#333" stroke-width="2" fill="none" /><path d="M7 8V1M5 3l2-3 2 3" stroke="#12128a" stroke-width="1.500" /></svg>
            <label class="combo grey"><select aria-label="Datum"><option>ComponentDatum</option></select><svg class="i8"><use href="#chev" /></svg></label>
            <svg class="axes toolm" viewBox="0 0 14 12"><path d="M1 4c3-4 9-4 12 0L8 7v4H6V7z" fill="#92959a" /><path d="M5 4h4M7 2v4" stroke="#eee" /></svg>
            <label class="combo white"><select aria-label="Değer"><option>520.58</option></select><svg class="i8"><use href="#chev" /></svg></label>
            <svg class="panes" viewBox="0 0 26 8"><path d="M1 1h7v6H1zM1 4h7M10 1h7v6h-7zM13.500 1v6" fill="#fff" stroke="#222" /><path d="M19 1h7v6h-7zM20 1l5 6M25 1l-5 6" fill="#ddd" stroke="#888" /></svg>
          </footer>
        </section>
      </main>

      <section class="sim">
        <div class="panelhead gold"><h2>Simülasyon</h2><svg class="i7"><use href="#pin" /></svg><svg class="i7"><use href="#x" /></svg></div>
        <div class="simgrid">
          <input v-model="progress" class="seek" type="range" min="0" max="1000" aria-label="İlerleme" />
          <div class="transport"><button v-for="p in transport" :key="p" :aria-label="p"><svg><use :href="'#' + p" /></svg></button><button class="dim" aria-label="lens"><svg><use href="#lens" /></svg></button></div>
          <div class="speedrow">
            <label class="fixed"><input type="checkbox" disabled />Sabit</label>
            <input v-model="speed" class="speed" type="range" min="0" max="1000" aria-label="Hız" />
          </div>
        </div>
      </section>
    </div>

    <footer class="band">
      <div class="brand">
        <svg class="swoosh" viewBox="0 0 270 67" preserveAspectRatio="none"><path d="M0 33h9c8 0 12-2 17-6L54 7c6-4 10-7 19-7h197v67H0z" fill="#000" /></svg>
        <div class="logo">
          <svg viewBox="0 0 44 48"><path d="M0 10l13-6 9-4 21 11v25L22 47 11 42 0 36z" fill="#c8060c" /><path d="M13 2v3l6 4v8l-9 6v22M13 5l15 7c5 2 7 5 7 9v7l8 0M19 17c0-4-1-7-6-12M10 33c1-4 5-6 10-8l15 3M35 28c-2 6-7 8-14 8l-11-5" fill="none" stroke="#160003" stroke-width="1.300" /><path d="M20 18l8 5-8 4z" fill="#160003" /></svg>
          <div class="words"><strong>PROTA</strong><em><b>AL</b>TAR</em></div>
        </div>
      </div>
    </footer>
  </div>
</template>

<style>
html, body { background: #000; overflow: hidden; }
</style>

<style scoped>
.screen { height: 100vh; display: flex; flex-direction: column; background: #000; font-family: "Open Sans", "Noto Sans", sans-serif; font-size: 7px; line-height: 9px; color: #222; }
.screen * { box-sizing: border-box; }
.defs { position: absolute; width: 0; height: 0; }
button { font: inherit; color: inherit; border: 0; background: none; padding: 0; margin: 0; }
h1, h2, h3, p, ul { margin: 0; padding: 0; font-weight: 400; font-size: inherit; }
svg { display: block; flex: none; }
i { font-style: normal; font-size: 6px; color: #777; }
.i7 { width: 7px; height: 7px; } .i8 { width: 8px; height: 8px; } .i9 { width: 9px; height: 9px; }
.i11 { width: 11px; height: 11px; } .i12 { width: 12px; height: 12px; } .i22 { width: 22px; height: 22px; }
.window { flex: 1; min-height: 0; display: flex; flex-direction: column; border-left: 3px solid #07697b; background: #e2e6e8; }

.titlebar { height: 24px; flex: none; display: flex; align-items: center; background: linear-gradient(#fff, #f8f8f8); }
.quick { display: flex; align-items: center; gap: 4px; padding-left: 1px; width: 160px; }
.quick .bar { margin: 0 -1px; }
.quick .more { margin-left: -1px; }
.bar { width: 1px; height: 10px; background: #bbb; }
.more { font-size: 6px; }
.titlebar h1 { flex: 1; text-align: center; font-family: Roboto, "Open Sans", sans-serif; font-size: 8px; line-height: 12px; white-space: nowrap; color: #333; }
.winbtns { display: flex; gap: 22px; padding: 0 7px 4px 12px; }
.winbtns svg { width: 8px; height: 8px; }

.tabs { height: 15px; flex: none; display: flex; background: linear-gradient(#f8f8f8, #eee); border-bottom: 1px solid #d5d5d5; color: #444; }
.file { width: 38px; margin-left: 1px; background: linear-gradient(#3a78d4, #1e56b4); color: #fff; border-radius: 2px 2px 0 0; font-weight: 600; }
.tab { padding: 0 10px; }
.tab.on { background: #fff; border: 1px solid #ccc; border-bottom: 0; border-radius: 2px 2px 0 0; height: 15px; }
.file + .tab { margin-left: 1px; }
.search { display: flex; align-items: center; gap: 7px; width: 200px; height: 13px; margin-left: 5px; margin-top: 1px; padding-left: 2px; background: #fff; border: 1px solid #ddd; }
.search input { border: 0; outline: 0; padding: 0; font: inherit; flex: 1; min-width: 0; }
.search input::placeholder { color: #666; }
.right { margin-left: auto; display: flex; align-items: center; gap: 2px; }
.adv { height: 14px; width: 36px; background: #fcd963; border: 1px solid #c8a545; border-radius: 1px; margin: 0 0 0 4px; }
.menu { display: flex; align-items: center; gap: 7px; margin-left: 1px; color: #222; }
.helpb { gap: 2px; margin-left: 4px; }

.ribbon { flex: none; height: 60px; display: flex; background: linear-gradient(#fff 40%, #e9ecee); border-bottom: 1px solid #8d9299; }
.group { display: flex; flex-direction: column; border-right: 1px solid #ccc; padding-top: 5px; }
.group p { text-align: center; color: #555; line-height: 10px; }
.btns { display: grid; height: 43px; }
.g-auto { grid-template-columns: 28px 30px 34px 46px 41px; padding: 0 3px 0 5px; }
.g-mill { grid-template-columns: 36px 32px 30px 32px 34px; padding: 0 0 0 3px; }
.g-cycle { grid-template-columns: 32px 30px 78px 74px 77px; padding: 0 2px; }
.g-insp { grid-template-columns: 28px 41px 26px; padding: 0 3px 0 2px; }
.big { display: flex; flex-direction: column; align-items: center; white-space: nowrap; line-height: 8px; }
.big .i22 { margin-bottom: 2px; }
.big > i { line-height: 8px; }
.sep { border-right: 1px solid #ddd; }
.off { color: #aaa; }
.col { display: grid; grid-template-rows: repeat(3, 15px); padding-left: 4px; }
.small { display: flex; align-items: center; gap: 2px; white-space: nowrap; height: 11px; }
.small i { margin-left: 2px; }

.panelhead { display: flex; align-items: center; gap: 6px; height: 13px; flex: none; padding: 0 0 0 3px; background: linear-gradient(#dde3ea, #d5e0eb); }
.panelhead h2 { flex: 1; color: #444; }
.follow { margin-top: 2px; }
.coords { height: 17px; margin-bottom: 3px; flex: none; display: flex; align-items: center; padding-left: 5px; background: linear-gradient(#fff, #e3e9ed); color: #333; }
.coords span { width: 47px; }
.coords span:nth-child(3) { width: 44px; }
.cicons { display: flex; align-items: center; gap: 3px; border-left: 1px solid #bbb; padding-left: 5px; }
.act { width: 14px; height: 14px; background: #ffd76a; border: 1px solid #c79a3d; display: grid; place-items: center; }

.work { flex: 1; min-height: 0; display: flex; gap: 2px; }
.side { width: 233px; flex: none; display: flex; flex-direction: column; border-right: 1px solid #aaa; border-bottom: 1px solid #aaa; background: #fff; }
.side .panelhead { padding-right: 3px; }
.sidebar-tools { height: 17px; flex: none; display: flex; align-items: center; gap: 3px; padding-left: 3px; background: linear-gradient(#fff, #dfe6ea); border-bottom: 1px solid #bcc; }
.sidebar-tools .bar { margin: 0 1px; }
.treebox { flex: 1; min-height: 0; display: grid; grid-template-columns: 1fr 11px; grid-template-rows: minmax(0, 1fr) 12px; }
.tree { overflow: hidden; color: #222; white-space: nowrap; }
.tree h3 { height: 15px; line-height: 14px; padding-left: 5px; }
.root { display: flex; align-items: center; height: 13px; padding-left: 3px; }
.root i { width: 12px; color: #222; font-size: 5px; }
.root span { padding-left: 1px; }
ul { list-style: none; }
li { display: flex; align-items: center; height: 13px; padding-left: 14px; }
li:nth-child(3n) { height: 12px; }
.twist { width: 6px; height: 8px; margin-right: 5px; }
.item { display: flex; align-items: center; gap: 1px; width: 193px; height: 100%; border: 1px solid transparent; }
.item .i12 { height: 11px; }
.item.sel { border-color: #33516a; }
.vscroll { background: #f0f0f0; display: flex; flex-direction: column; align-items: center; padding: 2px 0; }
.vthumb { width: 10px; height: 72%; background: #cdcdcd; margin: 2px 0 auto; }
.up { transform: rotate(180deg); } .left { transform: rotate(90deg); } .rgt { transform: rotate(-90deg); }
.hscroll { background: #f0f0f0; display: flex; align-items: center; padding: 0 2px; }
.htrack { flex: 1; height: 10px; margin: 0 3px; }
.hthumb { width: 65%; height: 10px; background: #cdcdcd; }

.view { flex: 1; min-width: 0; display: flex; flex-direction: column; border-left: 2px solid #9a9fa3; border-top: 1px solid #8a8f93; }
.canvas { flex: 1; min-height: 0; position: relative; background: linear-gradient(#fff, #eee 30%, #bebebe); overflow: hidden; }
.scene { position: absolute; inset: 0; width: 100%; height: 100%; }
.axis { font: bold 10px "Liberation Sans", sans-serif; }
.viewtools { position: absolute; left: 4px; top: 4px; display: grid; gap: 2px; }
.vrow { display: flex; gap: 2px; }
.viewtools button { width: 22px; height: 22px; border: 1px solid #e3f1fa; }
.viewtools svg { width: 20px; height: 20px; }
.orange { background: #ff6a0a; } .blue { background: #0868ea; } .cyan { background: #10c8f4; }
.notice { position: absolute; right: 0; top: 5px; display: flex; align-items: center; justify-content: space-between; width: 102px; height: 21px; padding-left: 7px; background: #2c2c48; border: 1px solid #8e3c46; border-right: 0; color: #fff; }
.notice svg { width: 19px; height: 19px; }
.status { height: 17px; flex: none; display: flex; align-items: center; background: #f0f0f0; font-family: "Liberation Sans", sans-serif; color: #333; }
.viewname { width: 79px; height: 15px; display: flex; align-items: center; gap: 1px; background: #9db6d6; padding-left: 1px; }
.viewname svg { width: 11px; height: 11px; }
.axes { width: 14px; height: 12px; margin: 0 3px 0 7px; }
.toolm { margin-left: 6px; }
.combo { height: 14px; display: flex; align-items: center; border: 1px solid #aaa; padding: 0 2px; }
.combo select { appearance: none; border: 0; outline: 0; background: none; font: inherit; font-size: 7px; padding: 0; flex: 1; min-width: 0; color: #222; overflow: hidden; text-overflow: clip; }
.grey { width: 67px; background: #e6e6e6; } .white { width: 51px; background: #fff; }
.panes { width: 26px; height: 8px; margin-left: auto; }

.sim { flex: none; background: #f0f0f0; border-top: 5px solid #e6e7e7; }
.gold { background: linear-gradient(#f5dc90, #fae39f); }
.simgrid { height: 43px; display: grid; grid-template-columns: 1fr 90px; grid-template-rows: 16px 1fr; column-gap: 7px; padding-left: 7px; border-bottom: 1px solid #ddd; }
.seek, .speed { appearance: none; margin: 0; background: none; width: 100%; height: 16px; }
.seek::-webkit-slider-runnable-track { height: 9px; border: 1px solid #ddd; background: #e8eae9; }
.seek::-webkit-slider-thumb { appearance: none; width: 8px; height: 13px; margin-top: -3px; background: #0878d4; clip-path: polygon(50% 0, 100% 25%, 100% 100%, 0 100%, 0 25%); }
.transport { display: flex; gap: 2px; }
.transport button { width: 14px; height: 14px; border: 1px solid #aaa; background: #eee; display: grid; place-items: center; }
.transport svg { width: 11px; height: 11px; }
.transport .dim { background: #ccc; }
.speedrow { display: flex; align-items: center; gap: 9px; height: 17px; padding-left: 1px; }
.fixed { width: 46px; height: 14px; display: flex; align-items: center; gap: 1px; padding-left: 4px; background: #ccc; border: 1px solid #bbb; color: #888; font-family: "Liberation Sans", sans-serif; font-size: 8px; flex: none; }
.fixed input { appearance: none; width: 7px; height: 7px; border: 1px solid #888; border-radius: 1px; margin: 0; }
.speed::-webkit-slider-runnable-track { height: 3px; border: 1px solid #ddd; background: #eee; }
.speed::-webkit-slider-thumb { appearance: none; width: 4px; height: 8px; margin-top: -3px; background: #0878d4; }

.band { position: relative; height: 34px; flex: none; background: #000; }
.brand { position: absolute; right: 0; bottom: 0; width: 264px; height: 67px; }
.swoosh { position: absolute; inset: 0; width: 100%; height: 100%; }
.logo { position: relative; display: flex; gap: 6px; justify-content: flex-end; padding: 7px 13px 0 0; }
.logo > svg { width: 44px; height: 48px; }
.words { display: flex; flex-direction: column; align-items: flex-end; color: #f5f5f5; }
.words strong { font: bold 39px/40px "Liberation Serif", serif; }
.words em { font: normal 16px/16px "Liberation Sans", sans-serif; }
.words b { color: #d8141a; font-weight: 400; }
</style>
